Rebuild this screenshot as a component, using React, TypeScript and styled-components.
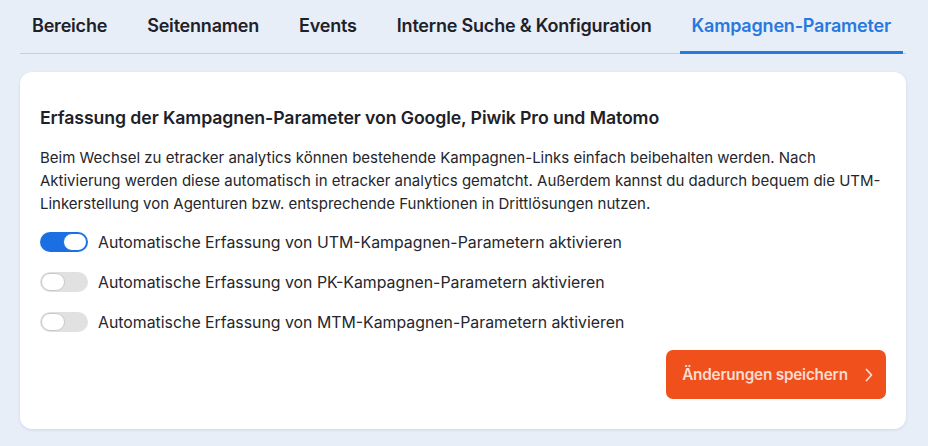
import styled, { createGlobalStyle } from "styled-components";
import { useState } from "react";

const GlobalStyle = createGlobalStyle`
  html, body {
    margin: 0;
    padding: 0;
    background: #e8eef8;
    font-family: Inter, "Noto Sans", sans-serif;
    color: #202128;
  }
`;

const Page = styled.div`
  width: 928px;
  height: 446px;
  padding: 0 22px 0 20px;
  box-sizing: border-box;
  display: flex;
  flex-direction: column;
`;

const Tabs = styled.div`
  display: flex;
  gap: 16px;
  height: 54px;
  border-bottom: 1px solid #c9ced8;
  box-sizing: border-box;
`;

const Tab = styled.div<{ $active?: boolean }>`
  padding: 0 12px;
  display: flex;
  align-items: center;
  font-size: 18px;
  font-weight: 600;
  letter-spacing: -0.2px;
  color: ${(p) => (p.$active ? "#2779dd" : "#202128")};
  border-bottom: 3px solid ${(p) => (p.$active ? "#2779dd" : "transparent")};
  margin-bottom: -1px;
  padding-bottom: 1px;
`;

const Card = styled.div`
  margin-top: 18px;
  background: #fff;
  border-radius: 12px;
  box-shadow: 0 1px 3px rgba(40, 50, 80, 0.12);
  padding: 34px 20px 30px 20px;
  display: flex;
  flex-direction: column;
`;

const Title = styled.h2`
  margin: 0 0 16px;
  font-size: 17.7px;
  font-weight: 600;
  line-height: 24px;
  letter-spacing: -0.1px;
`;

const Text = styled.p`
  margin: 0 0 7px;
  font-size: 15px;
  line-height: 23px;
  color: #25262d;
`;

const Row = styled.label`
  display: flex;
  align-items: center;
  gap: 10px;
  height: 40px;
  font-size: 15.85px;
  color: #25262d;
  cursor: pointer;
`;

const Track = styled.span<{ $on: boolean }>`
  width: 48px;
  height: 20px;
  border-radius: 10px;
  background: ${(p) => (p.$on ? "#1b6fe3" : "#e1e1e1")};
  display: flex;
  align-items: center;
  justify-content: ${(p) => (p.$on ? "flex-end" : "flex-start")};
  padding: 0 1px;
  box-sizing: border-box;
  flex-shrink: 0;
`;

const Knob = styled.span<{ $on: boolean }>`
  width: 24px;
  height: 18px;
  border-radius: 9px;
  background: #fff;
  box-sizing: border-box;
  border: 1px solid ${(p) => (p.$on ? "#1b6fe3" : "#c8c8c8")};
`;

const Footer = styled.div`
  display: flex;
  justify-content: flex-end;
  margin-top: 8px;
`;

const Button = styled.button`
  width: 220px;
  height: 49px;
  border: none;
  border-radius: 7px;
  background: #f0501c;
  color: #f9dccf;
  font-family: inherit;
  font-size: 15.3px;
  font-weight: 600;
  letter-spacing: -0.2px;
  display: flex;
  align-items: center;
  justify-content: center;
  gap: 16px;
  padding: 0 0 0 4px;
  cursor: pointer;
`;

const tabs = [
  "Bereiche",
  "Seitennamen",
  "Events",
  "Interne Suche & Konfiguration",
  "Kampagnen-Parameter",
];

export default function App() {
  const [flags, setFlags] = useState([true, false, false]);
  const labels = ["UTM", "PK", "MTM"];

  return (
    <>
      <GlobalStyle />
      <Page>
        <Tabs>
          {tabs.map((t, i) => (
            <Tab key={t} $active={i === tabs.length - 1}>
              {t}
            </Tab>
          ))}
        </Tabs>
        <Card>
          <Title>
            Erfassung der Kampagnen-Parameter von Google, Piwik Pro und Matomo
          </Title>
          <Text>
            Beim Wechsel zu etracker analytics können bestehende Kampagnen-Links
            einfach beibehalten werden. Nach Aktivierung werden diese
            automatisch in etracker analytics gematcht. Außerdem kannst du
            dadurch bequem die UTM-Linkerstellung von Agenturen bzw.
            entsprechende Funktionen in Drittlösungen nutzen.
          </Text>
          {labels.map((l, i) => (
            <Row
              key={l}
              onClick={() =>
                setFlags((f) => f.map((v, j) => (j === i ? !v : v)))
              }
            >
              <Track $on={flags[i]}>
                <Knob $on={flags[i]} />
              </Track>
              Automatische Erfassung von {l}-Kampagnen-Parametern aktivieren
            </Row>
          ))}
          <Footer>
            <Button>
              Änderungen speichern
              <svg width="10" height="14" viewBox="0 0 10 14" fill="none">
                <path
                  d="M2.5 1.5 L7.5 7 L2.5 12.5"
                  stroke="#f9dccf"
                  strokeWidth="1.8"
                  strokeLinecap="round"
                  strokeLinejoin="round"
                />
              </svg>
            </Button>
          </Footer>
        </Card>
      </Page>
    </>
  );
}
